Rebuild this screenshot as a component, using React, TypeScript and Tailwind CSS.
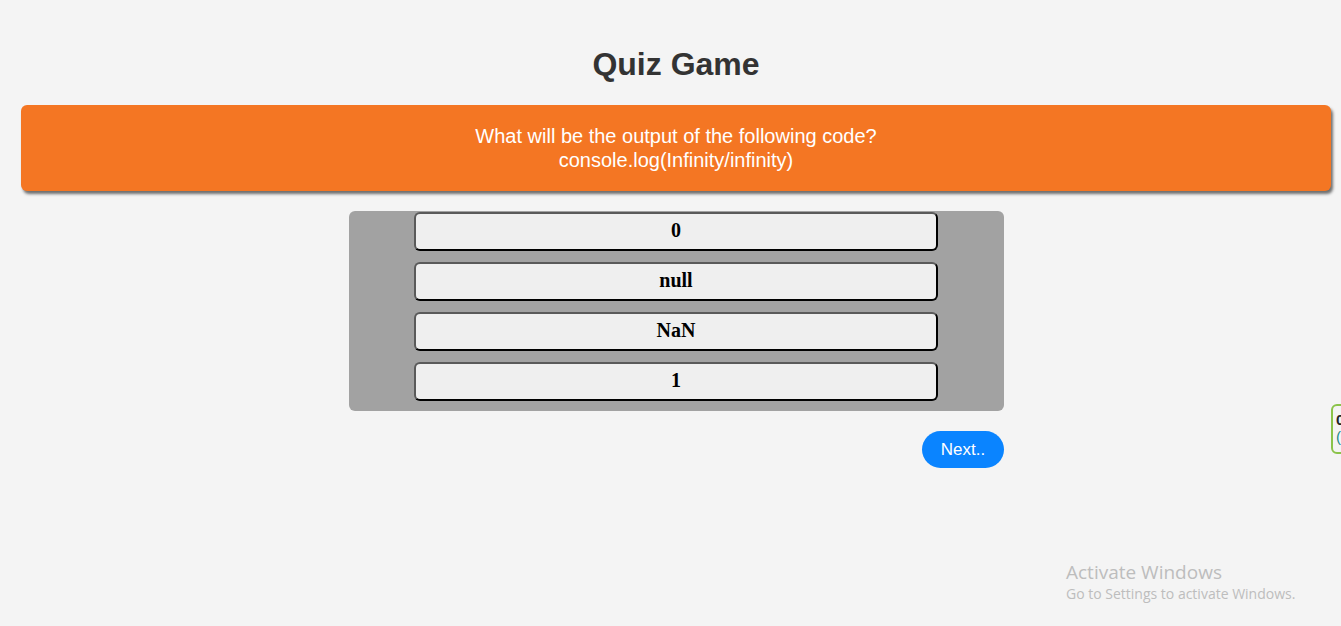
import { FC } from "react";

const options = ["0", "null", "NaN", "1"];

const App: FC = () => {
  return (
    <div className="relative h-[626px] w-[1341px] overflow-hidden bg-[#f4f4f4] font-['Liberation_Sans',Arial,sans-serif]">
      <div className="flex w-[1352px] flex-col items-center">
        <h1 className="mt-[44px] text-[32px] font-bold leading-[40px] text-[#333]">
          Quiz Game
        </h1>
        <div className="mt-[21px] flex h-[86px] w-[1310px] flex-col items-center justify-center rounded-[6px] bg-[#f47623] text-[20px] leading-[24px] text-white shadow-[2px_3px_3px_rgba(0,0,0,0.55)]">
          <p>What will be the output of the following code?</p>
          <p>console.log(Infinity/infinity)</p>
        </div>
        <div className="mt-[20px] ml-[1px] flex w-[655px] flex-col items-start gap-[11px] rounded-[6px] bg-[#a2a2a2] pt-[1px] pb-[10px] pl-[65px]">
          {options.map((opt) => (
            <button
              key={opt}
              className="h-[39px] w-[524px] rounded-[6px] border-2 border-t-[#5a5a5a] border-l-[#5a5a5a] border-r-black border-b-black bg-[#efefef] pb-[3px] font-['Liberation_Serif','Times_New_Roman',serif] text-[20px] font-bold leading-none text-black"
            >
              {opt}
            </button>
          ))}
        </div>
        <div className="mt-[20px] ml-[1px] flex w-[655px] justify-end">
          <button className="h-[37px] w-[82px] rounded-full bg-[#0a84ff] text-[17px] text-white">
            Next..
          </button>
        </div>
      </div>

      <div className="absolute top-[404px] left-[1331px] h-[50px] w-[40px] rounded-[6px] border-2 border-[#8bc34a] bg-[#f4f4f4] pl-[3px] pt-[5px] text-[15px] leading-[17px]">
        <div className="font-bold text-[#222]">0</div>
        <div className="text-[#1a8a8a]">(</div>
      </div>

      <div className="absolute top-[560px] left-[1066px] font-['Open_Sans','Noto_Sans',sans-serif] text-[#bdbdbd]">
        <div className="text-[19px] leading-[24px]">Activate Windows</div>
        <div className="text-[14px] leading-[20px]">Go to Settings to activate Windows.</div>
      </div>
    </div>
  );
};

export default App;
